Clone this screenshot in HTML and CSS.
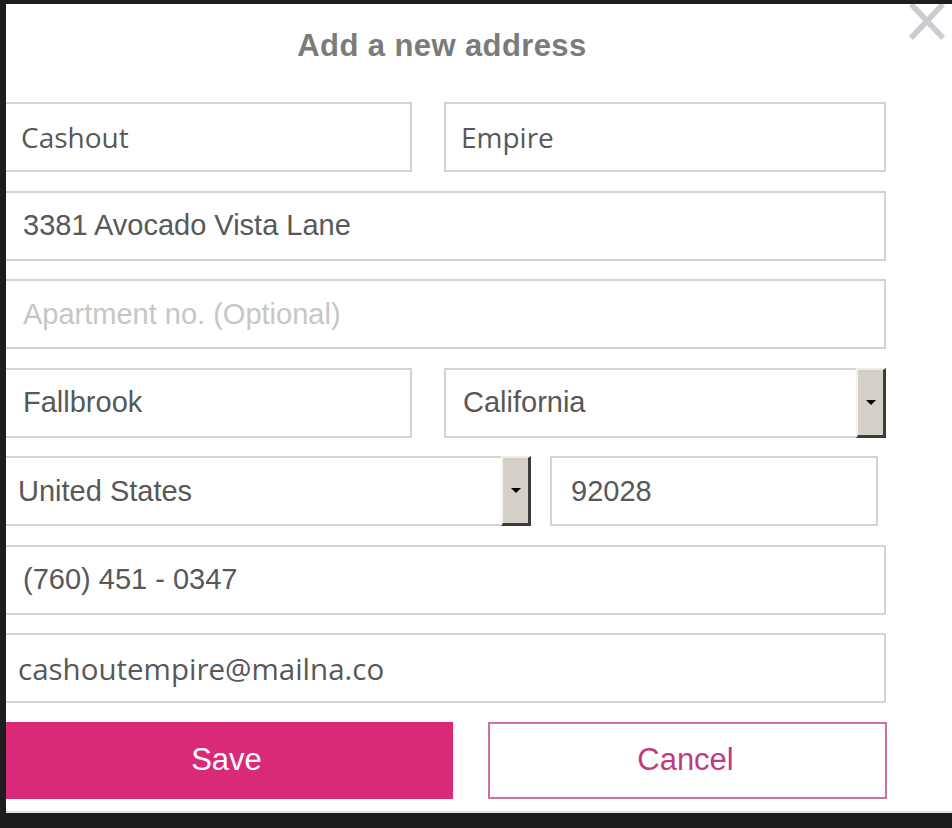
FILE: index.html
```html
<!DOCTYPE html>
<html lang="en">
<head>
<meta charset="utf-8">
<title>Add a new address</title>
<link rel="stylesheet" href="styles.css">
</head>
<body>
<div class="modal">
  <button class="close" aria-label="Close">
    <svg width="40" height="36" viewBox="0 0 40 36"><path d="M4 0 L36 34 M36 0 L4 34" stroke="#c9cdd1" stroke-width="5.5" fill="none"/></svg>
  </button>
  <div class="form">
    <h1 class="title">Add a new address</h1>
    <div class="row two">
      <div class="field os">Cashout</div>
      <div class="field os">Empire</div>
    </div>
    <div class="field">3381 Avocado Vista Lane</div>
    <div class="field placeholder">Apartment no. (Optional)</div>
    <div class="row two">
      <div class="field">Fallbrook</div>
      <div class="field select"><span class="sel-text">California</span><span class="sel-btn"><span class="tri"></span></span></div>
    </div>
    <div class="row country">
      <div class="field select tight"><span class="sel-text">United States</span><span class="sel-btn"><span class="tri"></span></span></div>
      <div class="field zip">92028</div>
    </div>
    <div class="field">(760) 451 - 0347</div>
    <div class="field os email tight">cashoutempire@mailna.co</div>
    <div class="row actions">
      <button class="btn save">Save</button>
      <button class="btn cancel">Cancel</button>
    </div>
  </div>
</div>
</body>
</html>
```

FILE: styles.css
```css
html, body {
  margin: 0;
  padding: 0;
  background: #1d1d1d;
}
body {
  width: 952px;
  height: 828px;
  overflow: hidden;
}
.modal {
  position: relative;
  margin: 4px 0 0 6px;
  width: 946px;
  height: 807px;
  background: #ffffff;
  border-bottom: 2px solid #e2e2e2;
  overflow: hidden;
  font-family: "Liberation Sans", Arial, sans-serif;
}
.close {
  position: absolute;
  top: 0;
  right: 5px;
  padding: 0;
  border: 0;
  background: none;
  line-height: 0;
}
.form {
  margin-left: -2px;
  width: 882px;
  display: flex;
  flex-direction: column;
  gap: 18.5px;
}
.title {
  margin: 0 0 -18.5px 0;
  height: 98px;
  box-sizing: border-box;
  padding: 25px 6px 0 0;
  font-size: 31px;
  line-height: 34px;
  font-weight: bold;
  color: #7b7b7b;
  text-align: center;
  letter-spacing: 0.4px;
}
.row {
  display: grid;
}
.row.two {
  grid-template-columns: 408px 442px;
  column-gap: 32px;
}
.row.country {
  grid-template-columns: 527px 328px;
  column-gap: 19px;
}
.row.actions {
  grid-template-columns: 449px 399px;
  column-gap: 35px;
}
.field {
  box-sizing: border-box;
  height: 70px;
  border: 2px solid #d3d3d3;
  padding: 0 18px 0 17px;
  display: flex;
  align-items: center;
  font-size: 29px;
  color: #585858;
}
.field.os {
  font-family: "Open Sans", sans-serif;
  font-size: 28px;
  padding-left: 15px;
}
.field.os.email {
  font-size: 29.5px;
}
.field.tight {
  padding-left: 12px;
}
.field.zip {
  padding-left: 19px;
}
.field.placeholder {
  color: #c6c6c6;
}
.field.select {
  padding-right: 0;
  border-right: 0;
}
.sel-text {
  flex: 1;
}
.sel-btn {
  box-sizing: border-box;
  width: 30px;
  height: 70px;
  margin-top: -2px;
  margin-bottom: -2px;
  background: #d4d0c8;
  border-top: 2px solid #efede8;
  border-left: 2px solid #f4f3ef;
  border-right: 3px solid #3c3c3c;
  border-bottom: 3px solid #3c3c3c;
  display: flex;
  align-items: center;
  justify-content: center;
}
.tri {
  width: 0;
  height: 0;
  border-left: 5px solid transparent;
  border-right: 5px solid transparent;
  border-top: 5px solid #000000;
}
.btn {
  box-sizing: border-box;
  height: 77px;
  font-family: "Liberation Sans", Arial, sans-serif;
  font-size: 31px;
  padding: 0 4px 0 0;
  margin: 0;
}
.save {
  background: #d92a78;
  color: #ffffff;
  border: 0;
}
.cancel {
  background: #ffffff;
  color: #c13b7f;
  border: 2px solid #d06fa2;
}
```
